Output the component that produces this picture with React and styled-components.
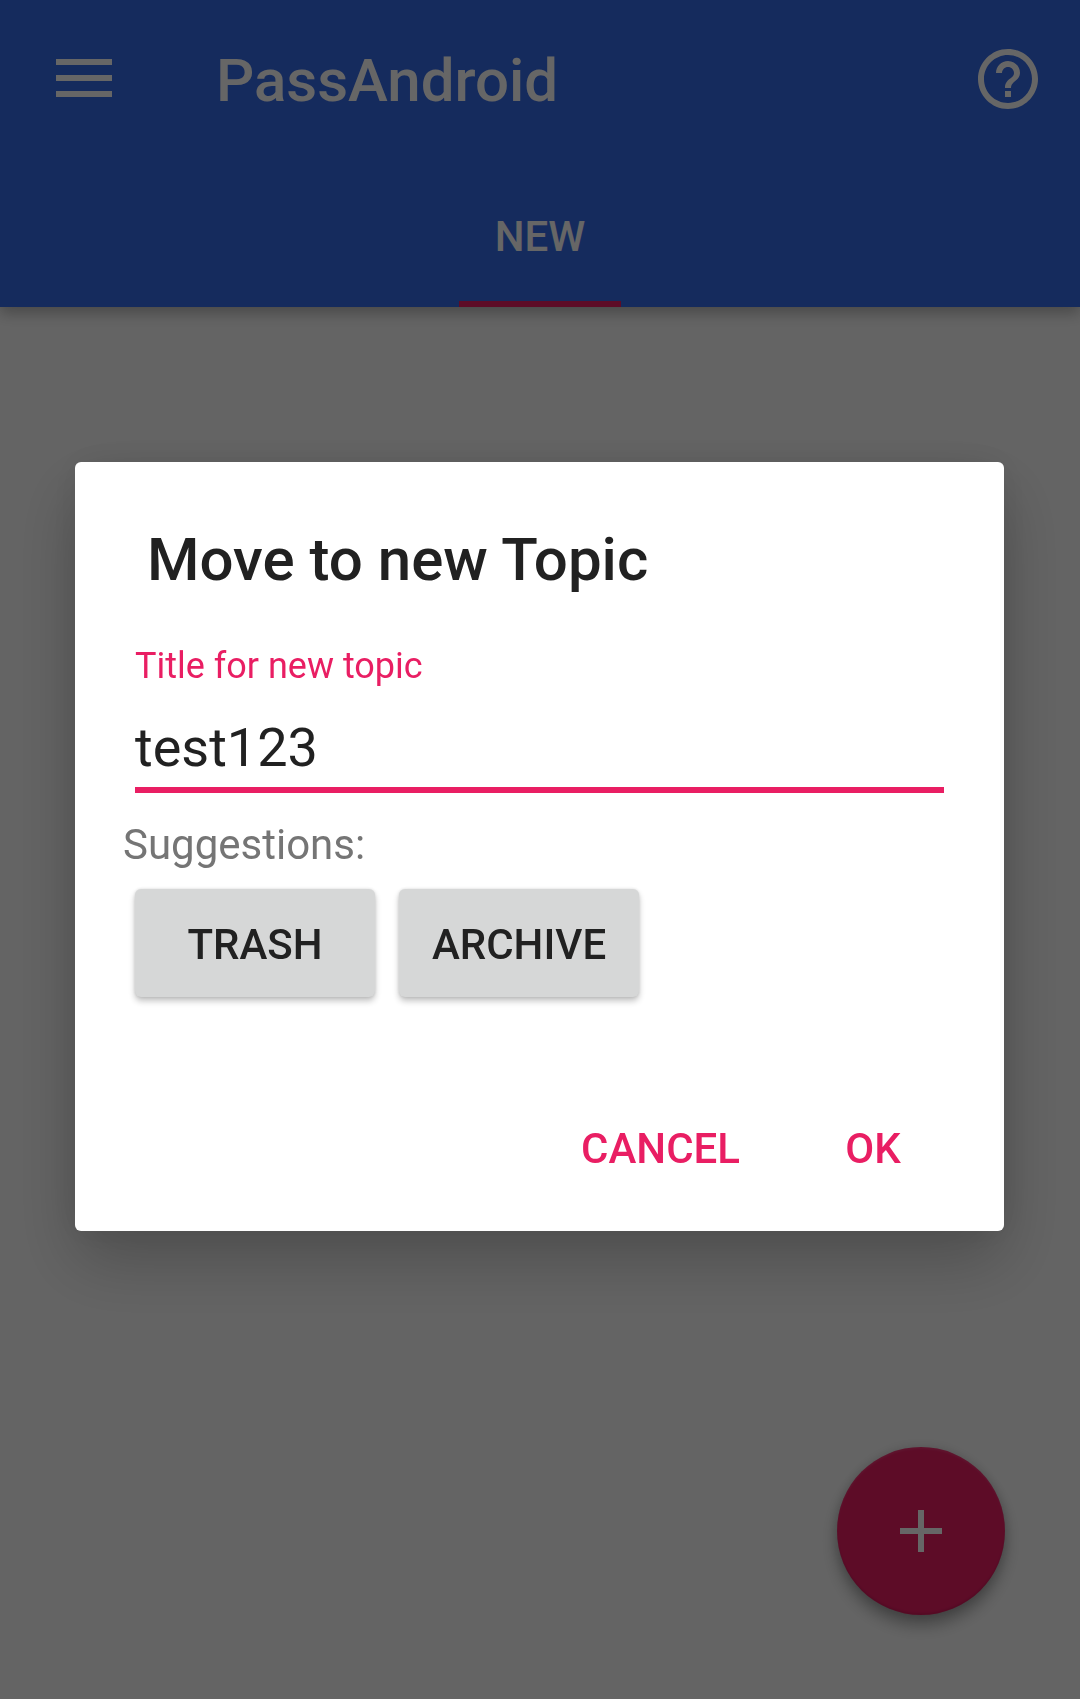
import React, { useState } from "react";
import styled, { createGlobalStyle } from "styled-components";

const GlobalStyle = createGlobalStyle`
  *, *::before, *::after {
    box-sizing: border-box;
  }
  body {
    margin: 0;
    background: #fafafa;
    font-family: Roboto, "Noto Sans", sans-serif;
  }
  button, input {
    font: inherit;
  }
`;

const Screen = styled.div`
  min-height: 100vh;
`;

const AppBar = styled.header`
  background: #366be8;
  color: #ffffff;
  box-shadow: 0 6px 14px rgba(0, 0, 0, 0.28);
`;

const Toolbar = styled.div`
  display: flex;
  align-items: center;
  height: 163px;
  padding: 0 36px 6px 48px;
`;

const IconButton = styled.button`
  display: flex;
  padding: 0;
  border: 0;
  background: none;
  color: inherit;
  cursor: pointer;
`;

const AppTitle = styled.h1`
  flex: 1;
  margin: 0 0 0 96px;
  padding-top: 4px;
  font-size: 60px;
  font-weight: 500;
  line-height: 72px;
`;

const Tabs = styled.nav`
  display: flex;
  justify-content: center;
  height: 144px;
`;

const Tab = styled.a`
  display: flex;
  align-items: center;
  padding: 8px 36px 0;
  border-bottom: 6px solid #e91e63;
  color: inherit;
  font-size: 42px;
  font-weight: 500;
  text-decoration: none;
`;

const Fab = styled.button`
  position: fixed;
  right: 75px;
  bottom: 84px;
  display: flex;
  align-items: center;
  justify-content: center;
  width: 168px;
  height: 168px;
  padding: 0;
  border: 0;
  border-radius: 50%;
  background: #e91e63;
  color: #ffffff;
  box-shadow:
    inset 0 2px 2px rgba(255, 255, 255, 0.1),
    inset 0 -2px 2px rgba(0, 0, 0, 0.1),
    0 10px 16px rgba(0, 0, 0, 0.32),
    0 0 12px rgba(0, 0, 0, 0.12);
  cursor: pointer;
`;

const Scrim = styled.div`
  position: fixed;
  inset: 0;
  display: flex;
  align-items: center;
  justify-content: center;
  padding: 0 76px 6px 75px;
  background: rgba(0, 0, 0, 0.6);
`;

const Dialog = styled.form`
  width: 100%;
  padding: 62px 35px 29px 36px;
  border-radius: 6px;
  background: #ffffff;
  color: #212121;
  box-shadow:
    0 30px 66px rgba(0, 0, 0, 0.22),
    0 0 36px rgba(0, 0, 0, 0.08);
`;

const DialogTitle = styled.h2`
  margin: 0 36px 48px;
  font-size: 60px;
  font-weight: 500;
  line-height: 72px;
`;

const Field = styled.div`
  display: flex;
  flex-direction: column;
  gap: 20px;
  margin: 0 25px 27px 24px;
`;

const FieldLabel = styled.label`
  color: #e91e63;
  font-size: 36px;
  line-height: 44px;
`;

const TextInput = styled.input`
  width: 100%;
  height: 85px;
  padding: 0;
  border: 0;
  border-bottom: 6px solid #e91e63;
  border-radius: 0;
  outline: none;
  background: none;
  color: #212121;
  font-size: 54px;
`;

const Hint = styled.p`
  margin: 0 12px 19px;
  color: #757575;
  font-size: 42px;
  line-height: 50px;
`;

const Suggestions = styled.div`
  display: flex;
  gap: 24px;
  margin: 0 24px 97px;
`;

const SuggestionButton = styled.button`
  min-width: 240px;
  height: 108px;
  padding: 2px 24px 0;
  border: 0;
  border-radius: 6px;
  background: #d6d7d7;
  color: #212121;
  font-size: 42px;
  font-weight: 500;
  box-shadow:
    0 4px 6px rgba(0, 0, 0, 0.24),
    0 0 3px rgba(0, 0, 0, 0.12);
  cursor: pointer;
`;

const Actions = styled.div`
  display: flex;
  justify-content: flex-end;
  gap: 13px;
`;

const ActionButton = styled.button`
  min-width: 192px;
  height: 108px;
  padding: 0 24px;
  border: 0;
  background: none;
  color: #e91e63;
  font-size: 42px;
  font-weight: 500;
  cursor: pointer;
`;

const suggestions = [
  { label: "TRASH", value: "trash" },
  { label: "ARCHIVE", value: "archive" },
];

function MenuIcon() {
  return (
    <svg width="72" height="72" viewBox="0 0 72 72" fill="currentColor" aria-hidden="true">
      <path d="M8 16h56v6H8zM8 32h56v6H8zM8 48h56v6H8z" />
    </svg>
  );
}

function HelpIcon() {
  return (
    <svg width="72" height="72" viewBox="0 0 24 24" fill="currentColor" aria-hidden="true">
      <path d="M11 18h2v-2h-2v2zm1-16C6.480 2 2 6.480 2 12s4.480 10 10 10 10-4.480 10-10S17.520 2 12 2zm0 18c-4.410 0-8-3.590-8-8s3.590-8 8-8 8 3.590 8 8-3.590 8-8 8zm0-14c-2.210 0-4 1.790-4 4h2c0-1.100.9-2 2-2s2 .9 2 2c0 2-3 1.750-3 5h2c0-2.250 3-2.500 3-5 0-2.210-1.790-4-4-4z" />
    </svg>
  );
}

function PlusIcon() {
  return (
    <svg width="72" height="72" viewBox="0 0 24 24" fill="currentColor" aria-hidden="true">
      <path d="M19 13h-6v6h-2v-6H5v-2h6V5h2v6h6v2z" />
    </svg>
  );
}

export default function App() {
  const [topic, setTopic] = useState("test123");

  return (
    <>
      <GlobalStyle />
      <Screen>
        <AppBar>
          <Toolbar>
            <IconButton type="button" aria-label="Menu">
              <MenuIcon />
            </IconButton>
            <AppTitle>PassAndroid</AppTitle>
            <IconButton type="button" aria-label="Help">
              <HelpIcon />
            </IconButton>
          </Toolbar>
          <Tabs>
            <Tab href="#new">NEW</Tab>
          </Tabs>
        </AppBar>
        <Fab type="button" aria-label="Add">
          <PlusIcon />
        </Fab>
      </Screen>
      <Scrim>
        <Dialog
          role="dialog"
          aria-modal="true"
          aria-labelledby="dialog-title"
          onSubmit={(event) => event.preventDefault()}
        >
          <DialogTitle id="dialog-title">Move to new Topic</DialogTitle>
          <Field>
            <FieldLabel htmlFor="topic">Title for new topic</FieldLabel>
            <TextInput
              id="topic"
              type="text"
              spellCheck={false}
              value={topic}
              onChange={(event) => setTopic(event.target.value)}
            />
          </Field>
          <Hint>Suggestions:</Hint>
          <Suggestions>
            {suggestions.map(({ label, value }) => (
              <SuggestionButton key={value} type="button" onClick={() => setTopic(value)}>
                {label}
              </SuggestionButton>
            ))}
          </Suggestions>
          <Actions>
            <ActionButton type="button">CANCEL</ActionButton>
            <ActionButton type="submit">OK</ActionButton>
          </Actions>
        </Dialog>
      </Scrim>
    </>
  );
}
